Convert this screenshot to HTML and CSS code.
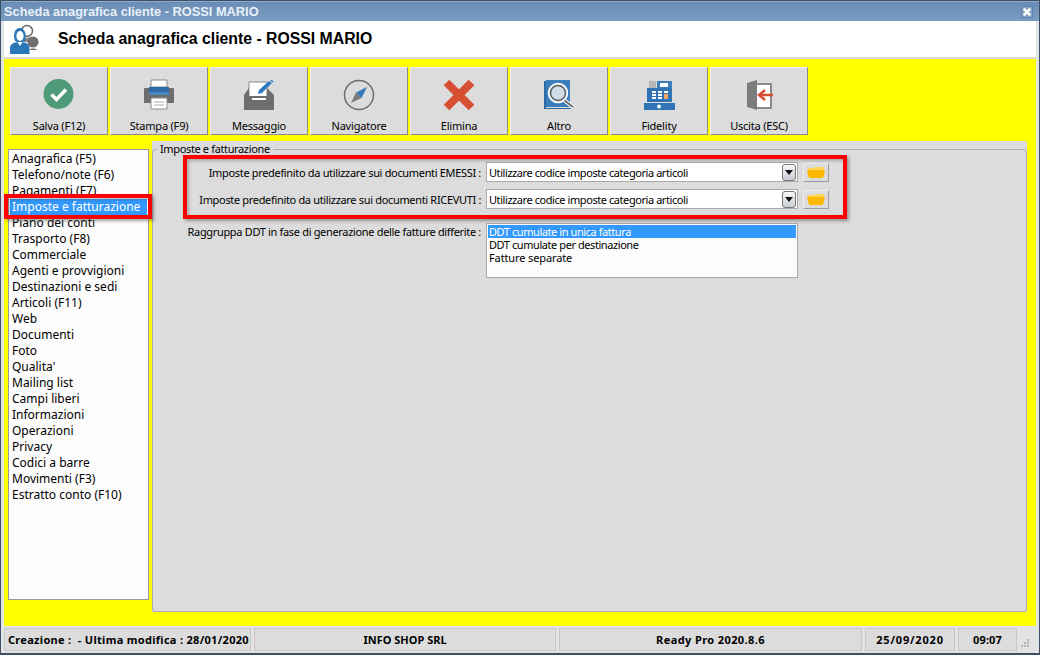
FILE: index.html
```html
<!DOCTYPE html>
<html lang="it">
<head>
<meta charset="utf-8">
<title>Scheda anagrafica cliente - ROSSI MARIO</title>
<link rel="stylesheet" href="styles.css">
</head>
<body>
<div class="window">
  <div class="titlebar">
    <span class="title-text">Scheda anagrafica cliente - ROSSI MARIO</span>
    <span class="close"><svg width="10" height="10" viewBox="0 0 12 12"><path d="M2 2l8 8M10 2l-8 8" stroke="#fff" stroke-width="3.200" fill="none"/></svg></span>
  </div>
  <div class="client">
    <header class="head">
      <svg class="head-icon" width="32" height="32" viewBox="0 0 32 32">
        <circle cx="19" cy="8" r="5.500" fill="#fff" stroke="#6b6b6b" stroke-width="1.500"/>
        <path d="M16 16c3-2 7-2 9 0v3h-9z" fill="#8a8a8a"/>
        <circle cx="25" cy="19" r="5.500" fill="#6e6e6e"/>
        <path d="M21 27c1-2 7-2 8 0z" fill="#6e6e6e"/>
        <path d="M7 18c-2-6-1-12 4.500-13 5.500 0 7.500 7 5.500 13l-2 1h-6z" fill="#2b78b8"/>
        <ellipse cx="12" cy="13" rx="3.600" ry="5" fill="#fff"/>
        <path d="M2 31v-6c0-4 4-6 10-6s9.500 2 9.500 6v6z" fill="#2b78b8"/>
        <path d="M9.500 19l2.500 4 2.500-4z" fill="#fff"/>
      </svg>
      <h1>Scheda anagrafica cliente - ROSSI MARIO</h1>
    </header>
    <main class="work">
      <nav class="toolbar">
        <button class="tool"><svg width="32" height="32" viewBox="0 0 32 32"><circle cx="15.500" cy="15" r="15" fill="#4f9a78"/><path d="M8.500 15.500l5 5 9.500-10" stroke="#fff" stroke-width="3.500" fill="none"/></svg><span>Salva (F12)</span></button>
        <button class="tool"><svg width="32" height="32" viewBox="0 0 32 32"><path d="M8 1h16v7H8z" fill="#fff" stroke="#8c8c8c"/><path d="M2 9h28a1 1 0 0 1 1 1v14H1V10a1 1 0 0 1 1-1z" fill="#6d6d6d"/><path d="M6 8h20v7H6z" fill="#2e6aa8"/><path d="M6 13h20v3H6z" fill="#4a85c0"/><path d="M8 19h16v11H8z" fill="#fff" stroke="#8c8c8c"/><path d="M11 23h10M11 26h10" stroke="#aaa"/></svg><span>Stampa (F9)</span></button>
        <button class="tool"><svg width="32" height="32" viewBox="0 0 32 32"><path d="M6 3h18v16H6z" fill="#fff" stroke="#8c8c8c"/><path d="M1 16l5-7v8h18V9l7 7v15H1z" fill="#6e6e6e"/><path d="M9 19h14v2H9z" fill="#fff"/><path d="M15 15l1-4L26 2l3 2-10 10z" fill="#2f78bd"/><path d="M28 1l2 2" stroke="#2f78bd" stroke-width="1.500"/></svg><span>Messaggio</span></button>
        <button class="tool"><svg width="32" height="32" viewBox="0 0 32 32"><circle cx="16" cy="16" r="14.500" fill="none" stroke="#6e6e6e" stroke-width="1.500"/><path d="M24 8l-5.500 11L13 13.500z" fill="#2f78bd"/><path d="M8 24l5-10.500 5.500 5.500z" fill="#7a7a7a"/></svg><span>Navigatore</span></button>
        <button class="tool"><svg width="32" height="32" viewBox="0 0 32 32"><path d="M3.500 3.500l25 25M28.500 3.500l-25 25" stroke="#d64f33" stroke-width="8" fill="none"/></svg><span>Elimina</span></button>
        <button class="tool"><svg width="32" height="32" viewBox="0 0 32 32"><path d="M3 1h24v27H3z" fill="#3a7fbc"/><path d="M1 2h2v27h25v1H1z" fill="#2a6aa3"/><circle cx="15" cy="14" r="9.500" fill="#dbe7ef" stroke="#fff" stroke-width="1.500"/><circle cx="15" cy="14" r="7.500" fill="#cfdde8" stroke="#5d5d5d" stroke-width="1.500"/><path d="M21 21l9 7" stroke="#fff" stroke-width="4"/><path d="M21.500 21.500l8.500 6.500" stroke="#6e6e6e" stroke-width="2"/></svg><span>Altro</span></button>
        <button class="tool"><svg width="32" height="32" viewBox="0 0 32 32"><path d="M6 2h7v8H6z" fill="#b5b5b5"/><path d="M14 2h15v8H14z" fill="#3a7fbc"/><path d="M17 4h8v4h-8z" fill="#fff"/><path d="M4 9h25v14H4z" fill="#2f74b5"/><path d="M9 12h4v2H9zM15 12h4v2h-4zM21 12h4v2h-4zM9 15h4v2H9zM15 15h4v2h-4zM9 18h4v2H9zM15 18h4v2h-4z" fill="#fff"/><path d="M21 15h4v5h-4z" fill="#f0a860"/><path d="M1 24h31v7H1z" fill="#2f74b5"/><circle cx="16" cy="27.500" r="2" fill="#fff"/></svg><span>Fidelity</span></button>
        <button class="tool"><svg width="32" height="32" viewBox="0 0 32 32"><path d="M14 5h14v24H14" fill="#fff" stroke="#8a8a8a" stroke-width="2"/><path d="M4 4l10-3v30L4 28z" fill="#7c7c7c"/><path d="M16 16h14M22 11l-6 5 6 5" stroke="#d64f33" stroke-width="2.500" fill="none"/></svg><span>Uscita (ESC)</span></button>
      </nav>
      <div class="body-row">
        <ul class="sections">
          <li>Anagrafica (F5)</li>
          <li>Telefono/note (F6)</li>
          <li>Pagamenti (F7)</li>
          <li class="selected">Imposte e fatturazione</li>
          <li>Piano dei conti</li>
          <li>Trasporto (F8)</li>
          <li>Commerciale</li>
          <li>Agenti e provvigioni</li>
          <li>Destinazioni e sedi</li>
          <li>Articoli (F11)</li>
          <li>Web</li>
          <li>Documenti</li>
          <li>Foto</li>
          <li>Qualita'</li>
          <li>Mailing list</li>
          <li>Campi liberi</li>
          <li>Informazioni</li>
          <li>Operazioni</li>
          <li>Privacy</li>
          <li>Codici a barre</li>
          <li>Movimenti (F3)</li>
          <li>Estratto conto (F10)</li>
        </ul>
        <section class="panel">
          <fieldset class="group">
            <legend>Imposte e fatturazione</legend>
            <div class="form-row">
              <label>Imposte predefinito da utilizzare sui documenti EMESSI :</label>
              <div class="combo"><span>Utilizzare codice imposte categoria articoli</span><i class="arrow"></i></div>
              <button class="folder"><svg width="18" height="12" viewBox="0 0 18 12"><path d="M1 2h6l1-1h9v3H1z" fill="#ffd65a"/><path d="M0 4h18l-2 8H2z" fill="#fcb900"/></svg></button>
            </div>
            <div class="form-row second">
              <label>Imposte predefinito da utilizzare sui documenti RICEVUTI :</label>
              <div class="combo"><span>Utilizzare codice imposte categoria articoli</span><i class="arrow"></i></div>
              <button class="folder"><svg width="18" height="12" viewBox="0 0 18 12"><path d="M1 2h6l1-1h9v3H1z" fill="#ffd65a"/><path d="M0 4h18l-2 8H2z" fill="#fcb900"/></svg></button>
            </div>
            <div class="form-row list-row">
              <label>Raggruppa DDT in fase di generazione delle fatture differite :</label>
              <ul class="listbox">
                <li class="selected">DDT cumulate in unica fattura</li>
                <li>DDT cumulate per destinazione</li>
                <li class="loose">Fatture separate</li>
              </ul>
            </div>
          </fieldset>
        </section>
      </div>
      <div class="mark mark-nav"></div>
      <div class="mark mark-form"></div>
    </main>
    <footer class="status">
      <div class="cell c1">Creazione :&nbsp; - Ultima modifica : 28/01/2020</div>
      <div class="cell c2">INFO SHOP SRL</div>
      <div class="cell c3">Ready Pro 2020.8.6</div>
      <div class="cell c4">25/09/2020</div>
      <div class="cell c5">09:07</div>
      <svg class="grip" width="10" height="10" viewBox="0 0 10 10"><path d="M7 1h2v2H7zM4 4h2v2H4zM7 4h2v2H7zM1 7h2v2H1zM4 7h2v2H4zM7 7h2v2H7z" fill="#b4b4b4"/></svg>
    </footer>
  </div>
</div>
</body>
</html>
```
FILE: styles.css
```css
* { box-sizing: border-box; }
html, body { margin: 0; padding: 0; }
body { width: 1040px; height: 655px; overflow: hidden; font-family: "Noto Sans", sans-serif; font-size: 11px; color: #000; }
.window { width: 1040px; height: 655px; display: flex; flex-direction: column; background: #6f93b9; border: 1px solid #3c4f63; border-bottom-width: 2px; }
.titlebar { height: 20px; flex: none; display: flex; align-items: center; justify-content: space-between; padding: 0 6px 0 3px; background: linear-gradient(#6a8db6, #7b9cc1); color: #fff; border-top: 1px solid #8eaacb; }
.title-text { font-family: "Liberation Sans", sans-serif; font-weight: bold; font-size: 12.8px; color: #e8f0f8; }
.close { width: 12px; height: 12px; display: flex; align-items: center; justify-content: center; border: 1px solid #5f83ab; background: #84a2c5; }
.close svg { display: block; }
.client { flex: 1; min-height: 0; display: flex; flex-direction: column; background: #e6e6e6; border: solid #e4e4e4; border-width: 0 3px; }
.head { height: 38px; flex: none; display: flex; align-items: center; background: #fff; border-bottom: 2px solid #d8d8d8; padding-left: 4px; }
.head-icon { flex: none; }
.head h1 { margin: 0 0 0 18px; font-family: "Liberation Sans", sans-serif; font-size: 15.8px; font-weight: bold; }
.work { position: relative; flex: 1; min-height: 0; background: #ff0; padding: 8px 9px 14px 4px; display: flex; flex-direction: column; }
.toolbar { display: flex; gap: 2px; flex: none; padding-left: 2px; }
.tool { width: 98px; height: 68px; padding: 11px 0 0; display: flex; flex-direction: column; align-items: center; justify-content: space-between; background: #dcdcdc; border: 1px solid; border-color: #f0f0f0 #8c8c8c #8c8c8c #f0f0f0; font: inherit; color: #000; }
.tool span { height: 16px; line-height: 16px; letter-spacing: -.2px; }
.body-row { flex: 1; min-height: 0; display: flex; margin-top: 6px; gap: 3px; }
.sections { width: 141px; margin: 8px 0 12px; padding: 1px; list-style: none; background: #fcfcfc; border: 1px solid #9a9a9a; }
.sections li { height: 16px; line-height: 16px; padding-left: 2px; font-size: 12px; white-space: nowrap; }
.sections .selected { background: #3399ff; color: #fff; }
.panel { flex: 1; min-width: 0; background: #dcdcdc; padding: 1px 0 0; }
.group { height: 100%; margin: 0; padding: 0; border: 1px solid #aeaeae; border-radius: 3px; }
.group legend { padding: 0 3px; margin-left: 4px; line-height: 14px; letter-spacing: -.36px; }
.form-row { display: flex; align-items: center; height: 20px; margin-top: 6px; }
.form-row.second { margin-top: 7px; }
.form-row label { width: 333px; flex: none; text-align: right; padding-right: 5px; white-space: nowrap; letter-spacing: -.33px; }
.combo { width: 312px; height: 20px; flex: none; display: flex; align-items: center; justify-content: space-between; padding: 0 1px 0 2px; background: #fff; border: 1px solid #aaa; letter-spacing: -.43px; }
.arrow { width: 14px; height: 17px; display: flex; align-items: center; justify-content: center; border: 1px solid #777; border-radius: 3px; background: linear-gradient(#f7f7f7, #c9cdd6); }
.arrow::after { content: ""; border: 4px solid transparent; border-top: 5px solid #111; border-bottom: 0; }
.folder { width: 26px; height: 19px; margin-left: 5px; padding: 0; display: flex; align-items: center; justify-content: center; background: #dcdcdc; border: 1px solid; border-color: #eee #9c9c9c #9c9c9c #eee; }
.list-row { align-items: flex-start; height: auto; margin-top: 14px; }
.list-row label { line-height: 17px; }
.listbox { width: 312px; height: 55px; margin: 0; padding: 1px; list-style: none; background: #fcfcfc; border: 1px solid #aaa; letter-spacing: -.43px; }
.listbox li { height: 13px; line-height: 13px; padding-left: 1px; white-space: nowrap; }
.listbox .selected { background: #3399ff; color: #fff; }
.listbox .loose { letter-spacing: -.12px; }
.mark { position: absolute; border: 4px solid #f00; box-shadow: 2px 2px 3px rgba(60, 60, 60, .45), inset 2px 2px 3px rgba(60, 60, 60, .3); pointer-events: none; }
.mark-nav { left: 0; top: 135px; width: 148px; height: 25px; }
.mark-form { left: 179px; top: 96px; width: 664px; height: 64px; }
.status { height: 27px; flex: none; display: flex; gap: 3px; padding: 2px 0; background: #e2e2e2; font-weight: bold; }
.cell { display: flex; align-items: center; justify-content: center; border: 1px solid #c8c8c8; background: #dcdcdc; white-space: nowrap; font-size: 11px; }
.c1 { width: 247px; justify-content: flex-start; padding-left: 3px; letter-spacing: .3px; }
.c2 { width: 302px; }
.c3 { width: 303px; letter-spacing: .4px; }
.c4 { width: 90px; letter-spacing: .8px; }
.c5 { width: 59px; letter-spacing: .1px; }
.grip { align-self: flex-end; margin: 0 0 3px 0; }
```
